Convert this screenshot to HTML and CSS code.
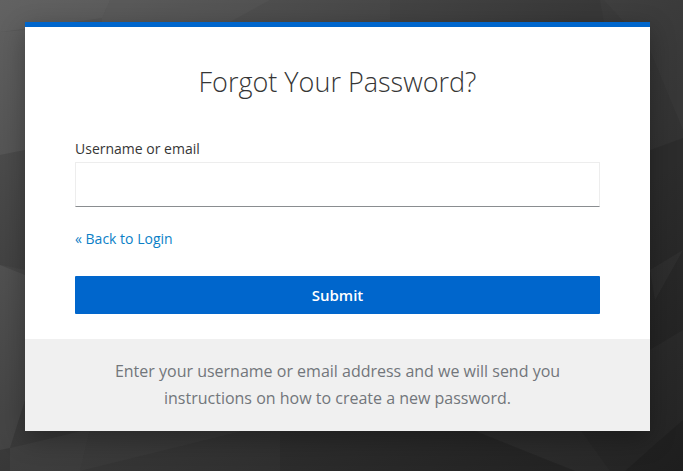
FILE: index.html
```html
<!DOCTYPE html>
<html lang="en">
<head>
  <meta charset="UTF-8" />
  <title>Forgot Your Password?</title>
  <link rel="stylesheet" href="styles.css">
</head>
<body>
  <!-- Low-poly backdrop -->
  <svg class="backdrop" viewBox="0 0 683 471" preserveAspectRatio="none" aria-hidden="true">
    <defs>
      <linearGradient id="bgFade" x1="0" y1="0" x2="1" y2="1">
        <stop offset="0" stop-color="#5c5c5c"/>
        <stop offset="0.5" stop-color="#383838"/>
        <stop offset="1" stop-color="#232323"/>
      </linearGradient>
    </defs>
    <rect width="683" height="471" fill="url(#bgFade)"/>
    <polygon points="0,0 110,0 102,18 0,32" fill="#fff" opacity=".04"/>
    <polygon points="102,18 110,0 270,0 230,22 102,22" fill="#fff" opacity=".025"/>
    <polygon points="390,0 600,0 604,22 390,22" fill="#000" opacity=".05"/>
    <polygon points="604,0 683,0 683,130 650,50" fill="#fff" opacity=".02"/>
    <polygon points="650,150 683,138 683,330 650,350" fill="#000" opacity=".1"/>
    <polygon points="650,270 683,250 655,300" fill="#fff" opacity=".03"/>
    <polygon points="0,32 25,30 25,150 0,155" fill="#fff" opacity=".03"/>
    <polygon points="0,155 25,150 25,270 0,265" fill="#000" opacity=".06"/>
    <polygon points="0,265 25,275 25,400 10,448 0,450" fill="#fff" opacity=".05"/>
    <polygon points="10,448 90,429 80,471 10,471" fill="#fff" opacity=".03"/>
    <polygon points="80,471 90,429 250,429" fill="#fff" opacity=".025"/>
    <polygon points="280,429 470,429 575,471 280,471" fill="#000" opacity=".08"/>
    <polygon points="470,429 580,429 610,471 575,471" fill="#fff" opacity=".015"/>
    <polygon points="660,440 683,420 683,471 625,471" fill="#000" opacity=".12"/>
  </svg>

  <div class="card">
    <header class="card-header">
      <h1>Forgot Your Password?</h1>
    </header>

    <form class="card-form" onsubmit="return false;">
      <label class="field-label" for="username">Username or email</label>
      <input class="field-input" id="username" type="text"/>
      <a class="back-link" href="#">« Back to Login</a>
      <button class="submit-btn" type="submit">Submit</button>
    </form>

    <footer class="card-info">
      Enter your username or email address and we will send you<br>
      instructions on how to create a new password.
    </footer>
  </div>
</body>
</html>
```

FILE: styles.css
```css
*{margin:0;padding:0;box-sizing:border-box;}
html,body{width:100%;height:100%;overflow:hidden;background:#333;}
body{font-family:"Open Sans",Arial,sans-serif;font-size:14px;padding:22px 33px 0 25px;}

.backdrop{position:absolute;top:0;left:0;width:100%;height:100%;}

.card{
  position:relative;
  width:625px;
  background:#fff;
  border-top:5px solid #06c;
  box-shadow:0 8px 24px rgba(0,0,0,.3);
}

.card-header{padding:36px 50px 0;text-align:center;}
.card-header h1{font-size:27px;font-weight:300;line-height:37px;color:#363636;}

.card-form{display:flex;flex-direction:column;padding:39px 50px 25px;}

.field-label{font-size:14px;line-height:20px;color:#363636;margin-bottom:3px;}

.field-input{
  height:45px;
  border:1px solid #ededed;
  border-bottom-color:#8a8d90;
  background:#fff;
  font:inherit;
  outline:none;
}

.back-link{font-size:14px;line-height:20px;color:#0b7fc7;text-decoration:none;margin-top:22px;}

.submit-btn{
  height:38px;
  margin-top:27px;
  border:none;
  border-radius:1px;
  background:#06c;
  color:#fff;
  font-family:inherit;
  font-size:15px;
  font-weight:600;
  cursor:pointer;
}

.card-info{
  background:#f0f0f0;
  color:#72767b;
  padding:19px 50px 19px;
  font-size:16px;
  line-height:27px;
  text-align:center;
}
```
